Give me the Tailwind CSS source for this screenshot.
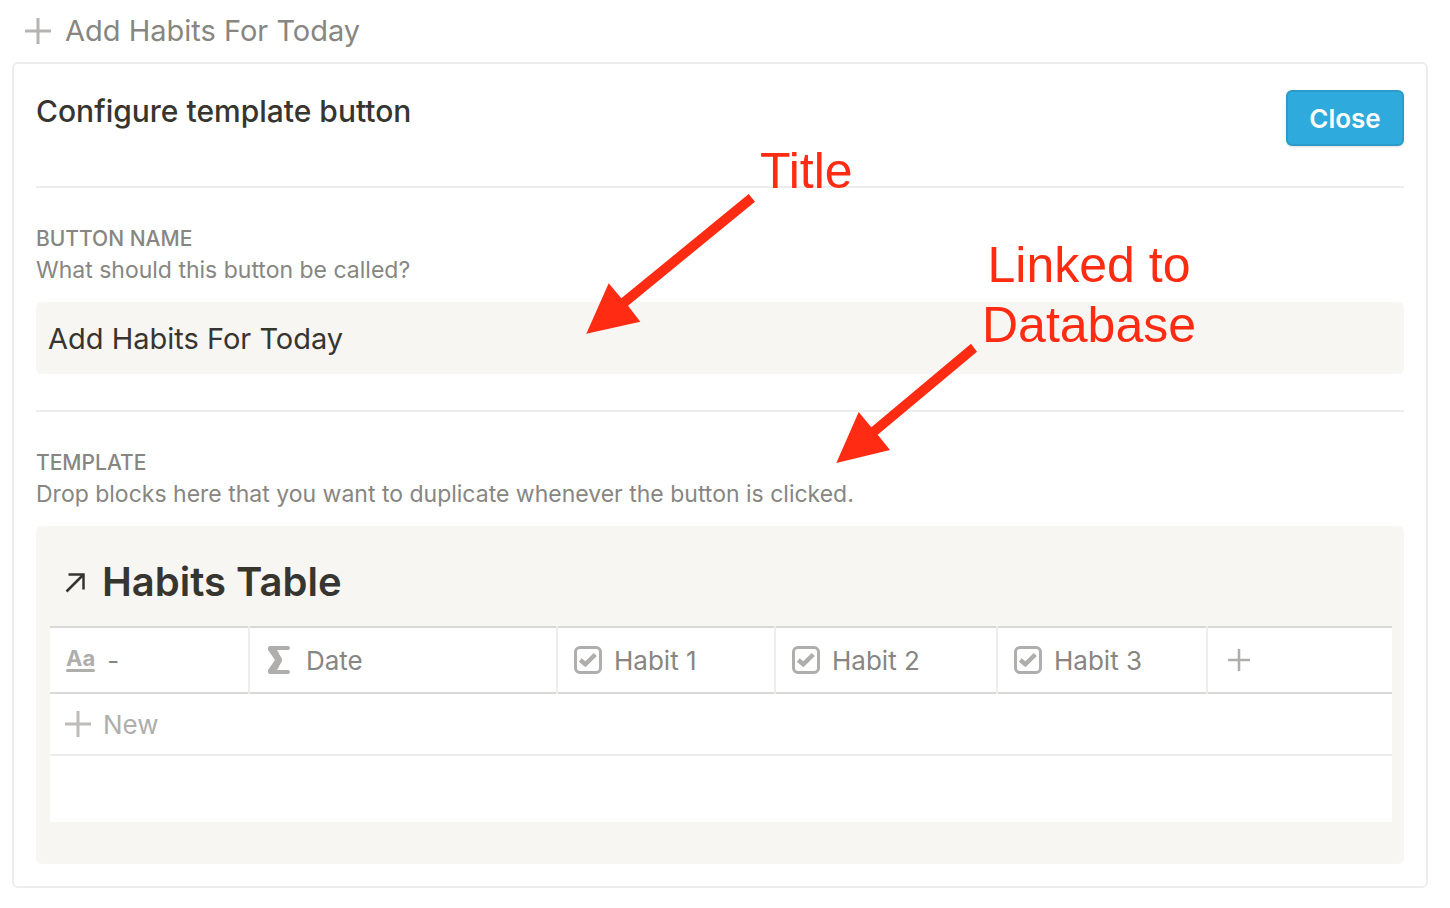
<!DOCTYPE html>
<html lang="en">
<head>
<meta charset="utf-8">
<meta name="viewport" content="width=device-width, initial-scale=1">
<title>Configure template button</title>
<script src="https://cdn.jsdelivr.net/npm/@tailwindcss/browser@4"></script>
</head>
<body class="relative bg-white pr-[22px] pb-5 pl-3 font-['Inter',sans-serif] text-[#37352f]">
<svg class="hidden" aria-hidden="true">
  <symbol id="plus" viewBox="0 0 26 26"><path d="M13 0v26M0 13h26" fill="none" stroke="currentColor" stroke-width="3"/></symbol>
  <symbol id="check" viewBox="0 0 28 28"><rect x="1.5" y="1.5" width="25" height="25" rx="4.5" fill="none" stroke="currentColor" stroke-width="3"/><path d="M6.300 14l5 4.300L21.300 8.500" fill="none" stroke="currentColor" stroke-width="4.500"/></symbol>
</svg>

<button type="button" class="flex h-[62px] items-center gap-[14px] pl-[13px] text-[29px] text-[#878682]">
  <svg class="size-[26px] text-[#b5b4b2]"><use href="#plus"/></svg>
  Add Habits For Today
</button>

<main class="rounded-md border-2 border-[#ededec] p-[22px]">
  <header class="flex h-[102px] items-start justify-between border-b-2 border-[#ededec] pt-1">
    <h1 class="text-[30px] leading-[42px] font-medium">Configure template button</h1>
    <button type="button" class="h-14 w-[118px] rounded-md border-2 border-[#2d9bc9] bg-[#2eaadc] text-[26px] font-semibold text-white shadow-sm">Close</button>
  </header>

  <section class="border-b-2 border-[#ededec] pt-9 pb-9">
    <label for="name" class="block text-[21px] leading-[30px] font-medium text-[#878682]">BUTTON NAME</label>
    <p class="text-[23px] leading-8 text-[#878682]">What should this button be called?</p>
    <input id="name" type="text" value="Add Habits For Today" class="mt-4 block h-[72px] w-full rounded-md bg-[#f7f6f3] px-3 text-[29px]">
  </section>

  <section class="pt-9">
    <h2 class="text-[21px] leading-[30px] font-medium text-[#878682]">TEMPLATE</h2>
    <p class="text-[23px] leading-8 text-[#878682]">Drop blocks here that you want to duplicate whenever the button is clicked.</p>
    <div class="mt-4 rounded-md bg-[#f7f6f3] pr-3 pb-[42px] pl-[14px]">
      <h3 class="flex h-[100px] items-center gap-4 pt-3 pl-[14px] text-[40px] font-semibold">
        <svg class="size-[22px]" viewBox="0 0 22 22" fill="none" stroke="currentColor" stroke-width="2.5"><path d="M4.500 3.500h15v15M19.500 3.500L2.500 20.500"/></svg>
        Habits Table
      </h3>
      <table class="w-full table-fixed border-collapse bg-white text-left text-[26px] text-[#878682]">
        <colgroup><col class="w-[199px]"><col class="w-[308px]"><col class="w-[218px]"><col class="w-[222px]"><col class="w-[210px]"><col></colgroup>
        <thead>
          <tr class="h-[66px] border-y-2 border-[#d9d9d8]">
            <th class="border-r-2 border-[#ededec] p-0 pl-4 font-normal"><span class="flex items-center gap-3"><span class="flex flex-col gap-px text-[22px] leading-5 font-bold text-[#afaeac]">Aa<span class="h-[3px] rounded-full bg-[#afaeac]"></span></span>-</span></th>
            <th class="border-r-2 border-[#ededec] p-0 pl-[18px] font-normal"><span class="flex items-center gap-4"><svg class="h-7 w-[22px] text-[#afaeac]" viewBox="0 0 22 28" fill="currentColor"><path d="M2 0H20Q22 0 22 2T20 4H9L14 13V15L9 24H20Q22 24 22 26T20 28H2Q0 28 0 26V24L7 14L0 4V2Q0 0 2 0Z"/></svg>Date</span></th>
            <th class="border-r-2 border-[#ededec] p-0 pl-4 font-normal"><span class="flex items-center gap-3"><svg class="size-7 text-[#afaeac]"><use href="#check"/></svg>Habit 1</span></th>
            <th class="border-r-2 border-[#ededec] p-0 pl-4 font-normal"><span class="flex items-center gap-3"><svg class="size-7 text-[#afaeac]"><use href="#check"/></svg>Habit 2</span></th>
            <th class="border-r-2 border-[#ededec] p-0 pl-4 font-normal"><span class="flex items-center gap-3"><svg class="size-7 text-[#afaeac]"><use href="#check"/></svg>Habit 3</span></th>
            <th class="p-0 pl-5"><button type="button" aria-label="Add column" class="block"><svg class="size-[22px] text-[#afaeac]"><use href="#plus"/></svg></button></th>
          </tr>
        </thead>
        <tbody>
          <tr class="h-[62px] border-b-2 border-[#ededec]">
            <td colspan="6" class="p-0"><button type="button" class="flex w-full items-center gap-3 pl-[15px] text-[#afaeac]"><svg class="size-[26px] text-[#bdbcba]"><use href="#plus"/></svg>New</button></td>
          </tr>
          <tr class="h-[67px]"><td colspan="6"></td></tr>
        </tbody>
      </table>
    </div>
  </section>
</main>

<!-- Callouts drawn over the form -->
<svg class="pointer-events-none absolute top-0 left-0 h-[480px] w-[1220px]" viewBox="0 0 1220 480" fill="#ff2b12" aria-hidden="true">
  <path d="M586.300 333.700L608.700 283.300L621.300 298.300L748.700 194L755 201.700L628 305.700L640.300 321.700Z"/>
  <path d="M836.300 463L858.700 412L871.300 427.300L971 343.700L977 351.700L877.700 434.700L890 450Z"/>
</svg>
<p class="pointer-events-none absolute top-[141px] left-[760px] font-['Liberation_Sans',sans-serif] text-[50px] leading-[60px] text-[#ff2b12]">Title</p>
<p class="pointer-events-none absolute top-[235px] left-[982px] text-center font-['Liberation_Sans',sans-serif] text-[50px] leading-[60px] text-[#ff2b12]">Linked to<br>Database</p>
</body>
</html>
